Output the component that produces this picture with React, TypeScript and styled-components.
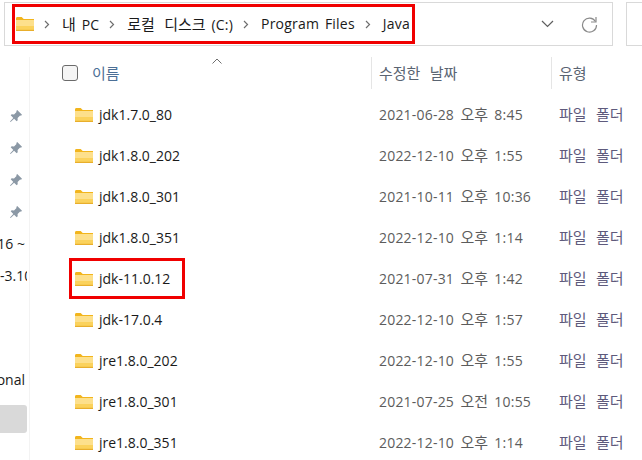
import React from "react"
import styled, { createGlobalStyle } from "styled-components"

const GlobalStyle = createGlobalStyle`
    html, body {
        margin: 0;
        padding: 0;
        background: #ffffff;
    }
    body {
        font-family: "Open Sans", "Noto Sans CJK KR", sans-serif;
        font-size: 14px;
        line-height: 20px;
        color: #1a1a1a;
    }
`

const Page = styled.div`
    position: relative;
    width: 642px;
    height: 460px;
    overflow: hidden;
    padding-top: 2px;
    box-sizing: border-box;
`

// hangul sits a bit larger than the latin text in the shot
const Kr = styled.span`
    font-family: "Noto Sans CJK KR", sans-serif;
    font-size: 15px;
    word-spacing: 6px;
    letter-spacing: 0;
`

const TopBar = styled.div`
    display: flex;
    gap: 13px;
    padding-left: 4px;
    height: 44px;
`

const AddressBox = styled.div`
    width: 609px;
    flex: none;
    box-sizing: border-box;
    border: 1px solid #d9d9d9;
    display: flex;
    align-items: center;
    padding-left: 11px;
`

const SearchBox = styled.div`
    width: 40px;
    flex: none;
    box-sizing: border-box;
    border: 1px solid #d9d9d9;
`

const Crumb = styled.span`
    white-space: nowrap;
    color: #1a1a1a;
    word-spacing: 2px;
    letter-spacing: 0.2px;
`

const CrumbSep = styled.svg`
    width: 6px;
    height: 9px;
    flex: none;
    margin: 1px 12px 0 10px;
`

const AddressTools = styled.div`
    margin-left: auto;
    display: flex;
    align-items: center;
    gap: 27px;
    padding-right: 14px;
`

const Body = styled.div`
    display: flex;
    margin-top: 11px;
`

const Sidebar = styled.div`
    width: 29px;
    flex: none;
    height: 403px;
    border-right: 1px solid #f3f3f3;
    display: flex;
    flex-direction: column;
    align-items: flex-start;
    padding-top: 43px;
    overflow: hidden;
`

const SideRow = styled.div<{ $start?: boolean }>`
    width: 27px;
    height: 32px;
    flex: none;
    box-sizing: border-box;
    padding-right: 2px;
    display: flex;
    align-items: center;
    justify-content: ${(p) => (p.$start ? "flex-start" : "flex-end")};
    white-space: nowrap;
    overflow: hidden;
    color: #1a1a1a;
`

const PinRow = styled(SideRow)`
    padding-right: 4px;
`

const SideSpacer = styled.div<{ $h: number }>`
    height: ${(p) => p.$h}px;
    flex: none;
`

const SideSelected = styled.div`
    width: 27px;
    height: 28px;
    background: #d9d9d9;
    border-radius: 0 3px 3px 0;
    flex: none;
`

const Main = styled.div`
    flex: 1;
    min-width: 0;
`

const HeaderRow = styled.div`
    position: relative;
    height: 33px;
    display: grid;
    grid-template-columns: 341px 180px 1fr;
`

const HeaderCell = styled.div`
    display: flex;
    align-items: center;
    height: 32px;
    padding-left: 7px;
    border-left: 1px solid #e5e5e5;
    box-sizing: border-box;
    color: #5a6472;

    &:first-child {
        border-left: 0;
        padding-left: 32px;
        gap: 14px;
    }
`

const NameLabel = styled.span`
    color: #4c6f96;
`

const Check = styled.span`
    width: 16px;
    height: 16px;
    box-sizing: border-box;
    border: 1.5px solid #6b6b6b;
    border-radius: 3px;
    background: #f5f5f5;
    flex: none;
`

const SortCaret = styled.svg`
    position: absolute;
    left: 182px;
    top: 1px;
    width: 10px;
    height: 6px;
`

const Rows = styled.div`
    display: flex;
    flex-direction: column;
    padding-top: 4px;
`

const Row = styled.div`
    height: 41px;
    flex: none;
    display: grid;
    grid-template-columns: 341px 180px 1fr;
    align-items: center;
`

const NameCell = styled.div`
    display: flex;
    align-items: center;
    gap: 6px;
    padding-left: 45px;
    color: #1a1a1a;
`

const DateCell = styled.div`
    padding-left: 8px;
    color: #5c5c5c;
    white-space: nowrap;
    word-spacing: 2.5px;
    letter-spacing: 0.2px;
`

const TypeCell = styled.div`
    padding-left: 8px;
    color: #5e5a7c;
    white-space: nowrap;
`

const RedBox = styled.div<{ $l: number; $t: number; $w: number; $h: number }>`
    position: absolute;
    left: ${(p) => p.$l}px;
    top: ${(p) => p.$t}px;
    width: ${(p) => p.$w}px;
    height: ${(p) => p.$h}px;
    border: 3px solid #f00000;
    box-sizing: border-box;
    pointer-events: none;
`

const FolderIcon = styled.svg`
    flex: none;
    width: 18px;
    height: 14px;
`

const Folder = () => (
    <FolderIcon viewBox="0 0 18 14">
        <path d="M0 1.5C0 .7.6 0 1.3 0h4.4l2 2H18v2H0z" fill="#f2b51d" />
        <rect x="0" y="3" width="18" height="11" rx="1" fill="#fbd25c" />
        <rect x="0" y="3" width="18" height="6" fill="#fde08c" />
        <rect x="0" y="12.8" width="18" height="1.2" fill="#e8ae2c" />
    </FolderIcon>
)

const Pin = () => (
    <svg width="14" height="14" viewBox="0 0 14 14">
        <path
            d="M8.2 1 13 5.8l-1 .9-.9-.2-2.5 2.5.1 2.3-1 1-2.6-2.6L1.6 13 1 12.4l3.3-3.5L1.7 6.3l1-1 2.3.1 2.5-2.5-.2-.9z"
            fill="#8b98a5"
        />
    </svg>
)

const Sep = () => (
    <CrumbSep viewBox="0 0 6 9">
        <path d="M1 1l3.5 3.5L1 8" fill="none" stroke="#6e6e6e" strokeWidth="1.2" />
    </CrumbSep>
)

const files = [
    ["jdk1.7.0_80", "2021-06-28", "오후", "8:45"],
    ["jdk1.8.0_202", "2022-12-10", "오후", "1:55"],
    ["jdk1.8.0_301", "2021-10-11", "오후", "10:36"],
    ["jdk1.8.0_351", "2022-12-10", "오후", "1:14"],
    ["jdk-11.0.12", "2021-07-31", "오후", "1:42"],
    ["jdk-17.0.4", "2022-12-10", "오후", "1:57"],
    ["jre1.8.0_202", "2022-12-10", "오후", "1:55"],
    ["jre1.8.0_301", "2021-07-25", "오전", "10:55"],
    ["jre1.8.0_351", "2022-12-10", "오후", "1:14"],
]

const App = () => {
    return (
        <Page>
            <GlobalStyle />
            <TopBar>
                <AddressBox>
                    <Folder />
                    <Sep />
                    <Crumb><Kr>내</Kr> PC</Crumb>
                    <Sep />
                    <Crumb><Kr>로컬 디스크</Kr> (C:)</Crumb>
                    <Sep />
                    <Crumb>Program Files</Crumb>
                    <Sep />
                    <Crumb>Java</Crumb>
                    <AddressTools>
                        <svg width="13" height="8" viewBox="0 0 13 8">
                            <path d="M1 1l5.5 5.5L12 1" fill="none" stroke="#5f5f5f" strokeWidth="1.2" />
                        </svg>
                        <svg width="17" height="17" viewBox="0 0 17 17">
                            <path d="M14.5 5.5A7 7 0 1 0 15.5 9" fill="none" stroke="#8a8a8a" strokeWidth="1.2" />
                            <path d="M15 1v5h-5" fill="none" stroke="#8a8a8a" strokeWidth="1.2" />
                        </svg>
                    </AddressTools>
                </AddressBox>
                <SearchBox />
            </TopBar>
            <Body>
                <Sidebar>
                    <PinRow><Pin /></PinRow>
                    <PinRow><Pin /></PinRow>
                    <PinRow><Pin /></PinRow>
                    <PinRow><Pin /></PinRow>
                    <SideRow>16 ~</SideRow>
                    <SideRow $start>-3.10</SideRow>
                    <SideSpacer $h={72} />
                    <SideRow>onal</SideRow>
                    <SideSpacer $h={9} />
                    <SideSelected />
                </Sidebar>
                <Main>
                    <HeaderRow>
                        <HeaderCell>
                            <Check />
                            <NameLabel><Kr>이름</Kr></NameLabel>
                        </HeaderCell>
                        <HeaderCell><Kr>수정한 날짜</Kr></HeaderCell>
                        <HeaderCell><Kr>유형</Kr></HeaderCell>
                        <SortCaret viewBox="0 0 10 6">
                            <path d="M.5 5.5 5 1l4.5 4.5" fill="none" stroke="#6e6e6e" />
                        </SortCaret>
                    </HeaderRow>
                    <Rows>
                        {files.map(([name, date, ampm, time]) => (
                            <Row key={name}>
                                <NameCell>
                                    <Folder />
                                    {name}
                                </NameCell>
                                <DateCell>{date} <Kr>{ampm}</Kr> {time}</DateCell>
                                <TypeCell><Kr>파일 폴더</Kr></TypeCell>
                            </Row>
                        ))}
                    </Rows>
                </Main>
            </Body>
            <RedBox $l={12} $t={4} $w={403} $h={40} />
            <RedBox $l={69} $t={258} $w={116} $h={41} />
        </Page>
    )
}

export default App
